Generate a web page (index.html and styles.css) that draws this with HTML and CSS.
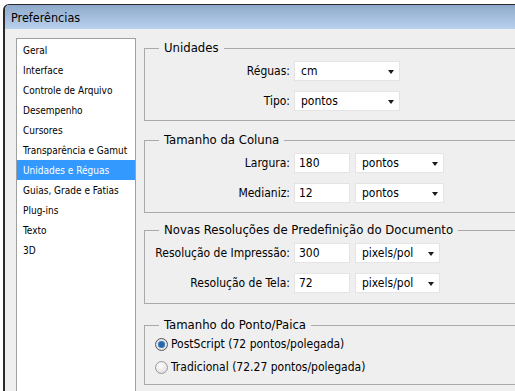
FILE: index.html
```html
<!DOCTYPE html>
<html lang="pt">
<head>
<meta charset="utf-8">
<title>Preferências</title>
<link rel="stylesheet" href="styles.css">
</head>
<body>
<div class="window">
  <div class="titlebar">Preferências</div>
  <div class="content">
    <ul class="nav">
      <li>Geral</li>
      <li>Interface</li>
      <li>Controle de Arquivo</li>
      <li>Desempenho</li>
      <li>Cursores</li>
      <li>Transparência e Gamut</li>
      <li class="selected">Unidades e Réguas</li>
      <li>Guias, Grade e Fatias</li>
      <li>Plug-ins</li>
      <li>Texto</li>
      <li>3D</li>
    </ul>
    <div class="panel">
      <fieldset class="group g1">
        <legend>Unidades</legend>
        <div class="row">
          <span class="label">Réguas:</span>
          <div class="select s-wide"><span>cm</span><i class="arrow"></i></div>
        </div>
        <div class="row">
          <span class="label">Tipo:</span>
          <div class="select s-wide"><span>pontos</span><i class="arrow"></i></div>
        </div>
      </fieldset>
      <fieldset class="group g2">
        <legend>Tamanho da Coluna</legend>
        <div class="row">
          <span class="label">Largura:</span>
          <div class="input">180</div>
          <div class="select s-mid"><span>pontos</span><i class="arrow"></i></div>
        </div>
        <div class="row">
          <span class="label">Medianiz:</span>
          <div class="input">12</div>
          <div class="select s-mid"><span>pontos</span><i class="arrow"></i></div>
        </div>
      </fieldset>
      <fieldset class="group g3">
        <legend>Novas Resoluções de Predefinição do Documento</legend>
        <div class="row">
          <span class="label">Resolução de Impressão:</span>
          <div class="input">300</div>
          <div class="select s-short"><span>pixels/pol</span><i class="arrow"></i></div>
        </div>
        <div class="row">
          <span class="label">Resolução de Tela:</span>
          <div class="input">72</div>
          <div class="select s-short"><span>pixels/pol</span><i class="arrow"></i></div>
        </div>
      </fieldset>
      <fieldset class="group g4">
        <legend>Tamanho do Ponto/Paica</legend>
        <div class="radio-row"><i class="radio checked"></i><span>PostScript (72 pontos/polegada)</span></div>
        <div class="radio-row"><i class="radio"></i><span>Tradicional (72.27 pontos/polegada)</span></div>
      </fieldset>
    </div>
  </div>
</div>
</body>
</html>
```
FILE: styles.css
```css
html, body {
  margin: 0;
  padding: 0;
  background: #ffffff;
  overflow: hidden;
  width: 515px;
  height: 391px;
}
body {
  font-family: "DejaVu Sans Condensed", "DejaVu Sans", sans-serif;
  color: #000;
}
.window {
  margin: 4px 0 0 3px;
  width: 620px;
  height: 420px;
  border-top: 1px solid #2a2a2a;
  border-left: 2px solid #2a2a2a;
  border-top-left-radius: 6px;
  overflow: hidden;
  display: flex;
  flex-direction: column;
}
.titlebar {
  height: 24px;
  flex: none;
  background: linear-gradient(#8ea9cb, #b9d1ed);
  font-size: 12.5px;
  line-height: 25px;
  padding-left: 6px;
}
.content {
  flex: 1;
  background: #efefef;
  display: flex;
  align-items: flex-start;
  padding: 9px 0 0 11px;
}
.nav {
  list-style: none;
  margin: 0;
  padding: 1px 0 0;
  width: 118px;
  height: 400px;
  background: #fff;
  border: 1px solid #a0a0a0;
  font-size: 10px;
  flex: none;
}
.nav li {
  height: 19px;
  line-height: 21px;
  padding: 0 0 1px 6px;
  white-space: nowrap;
}
.nav li.selected {
  background: #3399ff;
  color: #fff;
}
.panel {
  margin-left: 8px;
  margin-top: 2px;
  flex: 1;
  display: flex;
  flex-direction: column;
}
.group {
  margin: 0;
  padding: 5px 0 9px;
  border: 1px solid #a9a9a9;
  min-width: 0;
}
.group legend {
  margin-left: 14px;
  padding: 0 5px;
  font-size: 13px;
  line-height: 16px;
}
.g2 { margin-top: 11px; }
.g3 { margin-top: 9px; padding-bottom: 10px; }
.g4 { margin-top: 13px; padding: 2px 0 8px; }
.row {
  display: flex;
  align-items: center;
  height: 20px;
  font-size: 12px;
}
.row + .row { margin-top: 10px; }
.label {
  width: 145px;
  text-align: right;
  margin-right: 4px;
  white-space: nowrap;
}
.input, .select {
  height: 20px;
  box-sizing: border-box;
  background: #fff;
  border: 1px solid #e4e4e4;
  line-height: 18px;
  font-size: 12px;
  display: flex;
  align-items: center;
}
.input {
  width: 56px;
  padding-left: 4px;
  margin-right: 5px;
}
.select {
  padding-left: 6px;
  padding-right: 5px;
  justify-content: space-between;
}
.s-wide { width: 106px; }
.s-mid { width: 89px; }
.s-short { width: 85px; }
.arrow {
  width: 0;
  height: 0;
  border-left: 3.5px solid transparent;
  border-right: 3.5px solid transparent;
  border-top: 4px solid #1a1a1a;
  margin-top: 1px;
}
.radio-row {
  display: flex;
  align-items: center;
  height: 18px;
  font-size: 12px;
  padding-left: 10px;
}
.radio-row + .radio-row { margin-top: 5px; }
.radio {
  width: 11px;
  height: 11px;
  border-radius: 50%;
  border: 1px solid #9a9a9a;
  background: radial-gradient(circle at 40% 35%, #fefefe, #d6d6d6);
  margin-right: 3px;
  position: relative;
  flex: none;
}
.radio.checked {
  border-color: #5a5a5a;
  background: radial-gradient(circle at 50% 50%, #2b66a8 0 2.5px, #5a9ad8 3.5px, #e8e8e8 4px, #cfcfcf 100%);
}
```
